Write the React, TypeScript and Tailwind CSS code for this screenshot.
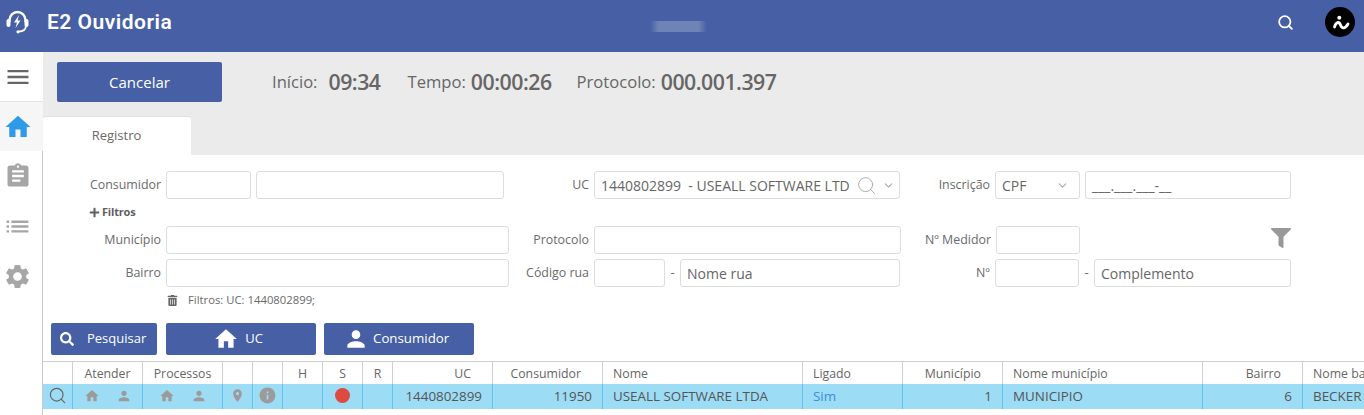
import type { ReactNode } from 'react'
import { FaFilter, FaPlus, FaSearch, FaTrashAlt } from 'react-icons/fa'
import { MdAssignment, MdHome, MdInfo, MdList, MdMenu, MdPerson, MdPlace, MdSettings } from 'react-icons/md'
import { ChevronDown, Search } from 'lucide-react'

const inputBox = 'h-[28px] rounded-[3px] border border-[#dcdcdc] bg-white px-[6px] flex items-center text-[14px] text-[#666]'

function Label({ width, children }: { width: string; children: ReactNode }) {
  return <span className={`${width} shrink-0 pr-[5px] text-right text-[12.4px] text-[#6a6a6a]`}>{children}</span>
}

function Logo() {
  return (
    <svg width="23" height="24" viewBox="0 0 23 24" fill="none" className="text-white">
      <path d="M3.500 12V10a8 8 0 0 1 16 0v2" stroke="currentColor" strokeWidth="2.400" />
      <rect x="0.500" y="9" width="4" height="8" rx="2" fill="currentColor" />
      <rect x="18.500" y="9" width="4" height="8" rx="2" fill="currentColor" />
      <path d="M13 5 8 12.500h3L9.500 18l5-7.500h-3z" fill="currentColor" />
      <path d="M20 15.500c0 4-3 6-7.500 6.200" stroke="currentColor" strokeWidth="1.800" />
      <circle cx="12" cy="21.800" r="1.600" fill="currentColor" />
    </svg>
  )
}

function Avatar() {
  return (
    <svg width="30" height="30" viewBox="0 0 30 30" fill="none">
      <circle cx="15" cy="15" r="15" fill="black" />
      <circle cx="14.300" cy="10.700" r="2" fill="white" />
      <path d="M9.500 20C11 15 14 14 15.500 18C17 22 20 22 23 17" stroke="white" strokeWidth="2.800" strokeLinecap="round" />
    </svg>
  )
}

function Header() {
  return (
    <header className="flex h-[52px] items-center bg-[#465fa5] pb-[8px] text-white">
      <div className="ml-[6px] flex w-[23px] justify-center"><Logo /></div>
      <h1 className="ml-[18px] mt-[2px] text-[21px] font-semibold tracking-[0.5px]" style={{ fontFamily: 'Roboto' }}>E2 Ouvidoria</h1>
      <div className="ml-[478px] mt-[8px] h-[11px] w-[57px] bg-[linear-gradient(90deg,#465fa5,#6f84b6_15%,#6f84b6_85%,#465fa5)]" />
      <div className="ml-auto mr-[9px] flex items-center gap-[31px]">
        <Search size={17} strokeWidth={2.500} />
        <Avatar />
      </div>
    </header>
  )
}

function Sidebar() {
  return (
    <aside className="flex w-[43px] shrink-0 flex-col bg-white text-[#a6a6a6]">
      <div className="flex h-[50px] w-full items-center justify-center border-b border-[#dde5ec] pr-[8px] text-[#666]">
        <MdMenu size={28} />
      </div>
      <div className="flex h-[49px] w-full items-center justify-center bg-[#f6f6f6] pr-[8px] text-[#2f9be8]">
        <MdHome size={30} />
      </div>
      <div className="flex-1 border-r border-r-[#c8c8c8] pr-[7px]">
        <div className="flex h-[50px] items-center justify-center"><MdAssignment size={28} /></div>
        <div className="flex h-[50px] items-center justify-center"><MdList size={29} /></div>
        <div className="flex h-[50px] items-center justify-center"><MdSettings size={29} /></div>
      </div>
    </aside>
  )
}

function Toolbar() {
  return (
    <div className="h-[103px] bg-[#ebebeb]">
      <div className="flex h-[64px] items-start pl-[14px] pt-[10px] text-[#666]">
        <button className="h-[40px] w-[165px] rounded-[2px] bg-[#465fa5] text-[15px] text-white">Cancelar</button>
        <div className="ml-[50px] flex h-[40px] items-center text-[16.600px]">
          <span>Início:</span>
          <b className="ml-[11px] text-[21.300px] font-semibold tracking-[-0.5px]">09:34</b>
          <span className="ml-[27px]">Tempo:</span>
          <b className="ml-[5px] text-[21.300px] font-semibold tracking-[-0.5px]">00:00:26</b>
          <span className="ml-[25px]">Protocolo:</span>
          <b className="ml-[5px] text-[21.300px] font-semibold tracking-[-0.5px]">000.001.397</b>
        </div>
      </div>
      <div className="flex h-[39px] w-[148px] items-center justify-center rounded-t-[3px] border-t border-[#e0e0e0] bg-white text-[13px] text-[#6a6a6a]">
        <span className="pr-[1px]">Registro</span>
      </div>
    </div>
  )
}

function Form() {
  return (
    <div className="flex flex-col pt-[16px]">
      <div className="flex items-center">
        <Label width="w-[123px]">Consumidor</Label>
        <div className={`${inputBox} w-[85px]`} />
        <div className={`${inputBox} ml-[5px] w-[248px]`} />
        <Label width="w-[90px]">UC</Label>
        <div className={`${inputBox} w-[306px]`}>
          <span className="whitespace-pre">1440802899  - USEALL SOFTWARE LTD</span>
          <Search size={21} strokeWidth={1.100} className="ml-[6px] shrink-0 text-[#aaa]" />
          <ChevronDown size={13} className="ml-[5px] shrink-0 text-[#aaa]" />
        </div>
        <Label width="w-[95px]">Inscrição</Label>
        <div className={`${inputBox} w-[85px] justify-between`}>
          <span>CPF</span>
          <ChevronDown size={13} className="mr-[4px] text-[#aaa]" />
        </div>
        <div className={`${inputBox} ml-[5px] w-[206px]`}>___.___.___-__</div>
      </div>

      <div className="flex h-[27px] items-center pl-[46px] text-[11px] font-bold text-[#5f5f5f]">
        <FaPlus size={11} />
        <span className="ml-[2px] tracking-[-0.2px]">Filtros</span>
      </div>

      <div className="flex items-center">
        <Label width="w-[123px]">Município</Label>
        <div className={`${inputBox} w-[343px]`} />
        <Label width="w-[85px]">Protocolo</Label>
        <div className={`${inputBox} w-[307px]`} />
        <Label width="w-[95px]">Nº Medidor</Label>
        <div className={`${inputBox} w-[84px]`} />
        <FaFilter size={20} className="mb-[4px] ml-[191px] text-[#999]" />
      </div>

      <div className="mt-[5px] flex items-center">
        <Label width="w-[123px]">Bairro</Label>
        <div className={`${inputBox} w-[343px]`} />
        <Label width="w-[85px]">Código rua</Label>
        <div className={`${inputBox} w-[71px]`} />
        <span className="w-[15px] text-center text-[13px] text-[#6a6a6a]">-</span>
        <div className={`${inputBox} w-[220px]`}>Nome rua</div>
        <Label width="w-[95px]">Nº</Label>
        <div className={`${inputBox} w-[84px]`} />
        <span className="w-[15px] text-center text-[13px] text-[#6a6a6a]">-</span>
        <div className={`${inputBox} w-[197px]`}>Complemento</div>
      </div>

      <div className="flex h-[26px] items-center pl-[124px] text-[11.300px] text-[#6a6a6a]">
        <FaTrashAlt size={11} className="text-[#666]" />
        <span className="ml-[10px]">Filtros: UC: 1440802899;</span>
      </div>

      <div className="mt-[10px] flex pl-[8px] text-[13px] text-white">
        <button className="flex h-[32px] w-[106px] items-center rounded-[2px] bg-[#465fa5] pl-[9px]">
          <FaSearch size={14} />
          <span className="ml-[13px]">Pesquisar</span>
        </button>
        <button className="ml-[9px] flex h-[32px] w-[150px] items-center justify-center rounded-[2px] bg-[#465fa5]">
          <MdHome size={26} />
          <span className="ml-[6px] pr-[6px]">UC</span>
        </button>
        <button className="ml-[8px] flex h-[32px] w-[150px] items-center rounded-[2px] bg-[#465fa5] pl-[19px]">
          <MdPerson size={26} />
          <span className="ml-[4px] text-[13.300px]">Consumidor</span>
        </button>
      </div>
    </div>
  )
}

const columns = [
  { w: 'w-[30px]', title: '', head: 'text-left', cell: 'px-0 pb-[2px]' },
  { w: 'w-[70px]', title: 'Atender', head: 'text-center', cell: 'px-0 pb-[2px]' },
  { w: 'w-[80px]', title: 'Processos', head: 'text-center', cell: 'px-0 pb-[2px]' },
  { w: 'w-[30px]', title: '', head: 'text-center', cell: 'px-0 pb-[2px]' },
  { w: 'w-[30px]', title: '', head: 'text-center', cell: 'px-0 pb-[2px]' },
  { w: 'w-[40px]', title: 'H', head: 'text-center', cell: 'px-0 pb-[2px]' },
  { w: 'w-[40px]', title: 'S', head: 'text-center', cell: 'px-0 pb-[2px]' },
  { w: 'w-[30px]', title: 'R', head: 'text-center', cell: 'px-0 pb-[2px]' },
  { w: 'w-[100px]', title: 'UC', head: 'text-right pr-[21px]', cell: 'px-[10px] text-right' },
  { w: 'w-[110px]', title: 'Consumidor', head: 'text-right pr-[21px]', cell: 'px-[10px] text-right' },
  { w: 'w-[200px]', title: 'Nome', head: 'text-left', cell: 'px-[10px] text-left' },
  { w: 'w-[100px]', title: 'Ligado', head: 'text-left', cell: 'px-[10px] text-left' },
  { w: 'w-[100px]', title: 'Município', head: 'text-right pr-[21px]', cell: 'px-[10px] text-right' },
  { w: 'w-[200px]', title: 'Nome município', head: 'text-left', cell: 'px-[10px] text-left' },
  { w: 'w-[100px]', title: 'Bairro', head: 'text-right pr-[21px]', cell: 'px-[10px] text-right' },
  { w: 'w-[100px]', title: 'Nome bairro', head: 'text-left', cell: 'px-[10px] text-left' },
]

const rowCells: ReactNode[] = [
  <Search size={19} strokeWidth={1.500} className="mx-auto text-[#666]" />,
  <div className="flex justify-center gap-[16px] text-[#9b9b9b]"><MdHome size={16} /><MdPerson size={16} /></div>,
  <div className="flex justify-center gap-[16px] text-[#9b9b9b]"><MdHome size={16} /><MdPerson size={16} /></div>,
  <MdPlace size={15} className="mx-auto text-[#9b9b9b]" />,
  <MdInfo size={19} className="mx-auto text-[#9b9b9b]" />,
  '',
  <div className="mx-auto h-[15px] w-[15px] rounded-full bg-[#dc4a40]" />,
  '',
  '1440802899',
  '11950',
  'USEALL SOFTWARE LTDA',
  <span className="text-[#3a8de0]">Sim</span>,
  '1',
  'MUNICIPIO',
  '6',
  'BECKER',
]

function Grid() {
  return (
    <div className="mt-[6px] overflow-hidden border-t border-[#cfcfcf] text-[#666]">
      <div className="flex h-[22px] text-[12.300px]">
        {columns.map((c, i) => (
          <div key={i} className={`${c.w} shrink-0 truncate border-r border-[#cfcfcf] pl-[10px] pr-[10px] leading-[23px] ${c.head}`}>{c.title}</div>
        ))}
      </div>
      <div className="flex h-[25px] bg-[#9cdcf5] text-[13.400px] text-[#555]">
        {columns.map((c, i) => (
          <div key={i} className={`${c.w} flex shrink-0 flex-col justify-center truncate border-r border-[#62c3ee] ${c.cell}`}>{rowCells[i]}</div>
        ))}
      </div>
    </div>
  )
}

export default function App() {
  return (
    <div className="flex h-[415px] w-[1364px] flex-col overflow-hidden bg-white" style={{ fontFamily: '"Open Sans", sans-serif' }}>
      <Header />
      <div className="flex min-h-0 flex-1">
        <Sidebar />
        <main className="min-w-0 flex-1">
          <Toolbar />
          <Form />
          <Grid />
        </main>
      </div>
    </div>
  )
}
